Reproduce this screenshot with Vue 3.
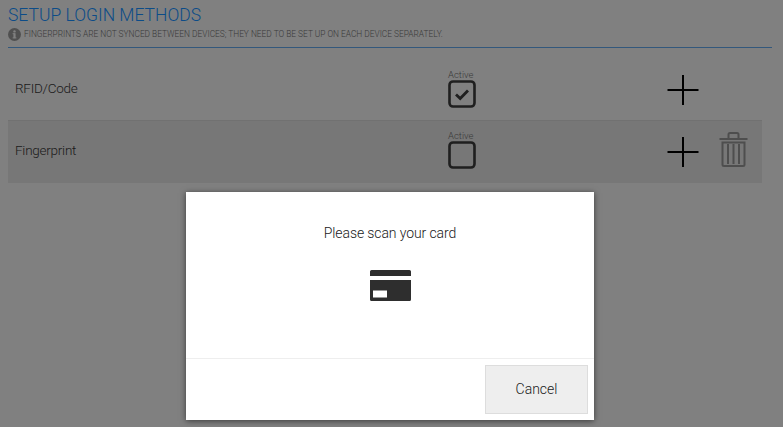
<script setup>
const rows = [
  { name: 'RFID/Code', checked: true, trash: false, alt: false },
  { name: 'Fingerprint', checked: false, trash: true, alt: true },
]
</script>

<template>
  <div class="page">
    <header class="head">
      <h1 class="title">SETUP LOGIN METHODS</h1>
      <p class="note">
        <svg class="info" width="13" height="13" viewBox="0 0 13 13">
          <circle cx="6.5" cy="6.5" r="6.5" fill="#505050" />
          <rect x="5.4" y="5.4" width="2.2" height="4.8" fill="#808080" />
          <rect x="4.6" y="5.2" width="2.6" height="1" fill="#808080" />
          <rect x="4.6" y="9.4" width="3.8" height="1" fill="#808080" />
          <circle cx="6.5" cy="3.4" r="1.2" fill="#808080" />
        </svg>
        <span>FINGERPRINTS ARE NOT SYNCED BETWEEN DEVICES; THEY NEED TO BE SET UP ON EACH DEVICE SEPARATELY.</span>
      </p>
    </header>

    <section class="list">
      <div v-for="r in rows" :key="r.name" class="row" :class="{ alt: r.alt }">
        <div class="name">{{ r.name }}</div>
        <div class="active">
          <span class="active-label">Active</span>
          <svg width="28" height="28" viewBox="0 0 28 28">
            <rect x="1.5" y="1.5" width="25" height="25" rx="3.5" fill="none" stroke="#1f1f1f" stroke-width="2.6" />
            <path v-if="r.checked" d="M8 14.5l4.2 4L20 10.5" fill="none" stroke="#1f1f1f" stroke-width="2.8" />
          </svg>
        </div>
        <div class="icon-cell">
          <svg width="32" height="32" viewBox="0 0 32 32">
            <path d="M0.5 16H31.5M16 1V31" stroke="#000" stroke-width="2" fill="none" />
          </svg>
        </div>
        <div class="icon-cell trash-cell">
          <svg v-if="r.trash" width="29" height="35" viewBox="0 0 29 35">
            <path d="M0.5 7H28.5" stroke="#4e4e4e" stroke-width="2" fill="none" />
            <path d="M9.5 6V2.5a1.5 1.5 0 0 1 1.5-1.5h7a1.5 1.5 0 0 1 1.5 1.5V6" stroke="#4e4e4e" stroke-width="2" fill="none" />
            <path d="M3.5 10.5H25.5V32.5a1.5 1.5 0 0 1-1.5 1.5H5a1.5 1.5 0 0 1-1.5-1.5Z" stroke="#4e4e4e" stroke-width="2" fill="none" />
            <path d="M9 12V32M14.5 12V32M20 12V32" stroke="#4e4e4e" stroke-width="2" fill="none" />
          </svg>
        </div>
      </div>
    </section>

    <div class="overlay">
      <div class="modal">
        <div class="modal-body">
          <p class="msg">Please scan your card</p>
          <svg class="card" width="41" height="31" viewBox="0 0 41 31">
            <path d="M1.5 0H39.5A1.5 1.5 0 0 1 41 1.5V6H0V1.5A1.5 1.5 0 0 1 1.5 0Z" fill="#2e2e2e" />
            <path d="M0 10H41V29.5A1.5 1.5 0 0 1 39.5 31H1.5A1.5 1.5 0 0 1 0 29.5Z" fill="#2e2e2e" />
            <rect x="3" y="20.5" width="14" height="7" fill="#fff" />
          </svg>
        </div>
        <div class="modal-foot">
          <button class="cancel" type="button">Cancel</button>
        </div>
      </div>
    </div>
  </div>
</template>

<style>
html, body { margin: 0; background: #808080; }
</style>

<style scoped>
.page {
  position: relative;
  width: 783px;
  height: 427px;
  overflow: hidden;
  background: #808080;
  font-family: Roboto, "Liberation Sans", sans-serif;
  font-weight: 300;
  box-sizing: border-box;
  padding-left: 8px;
}
.head {
  width: 764px;
  height: 48px;
  box-sizing: border-box;
  border-bottom: 1px solid #33587c;
}
.title {
  margin: 0;
  padding-top: 6px;
  font-size: 17.5px;
  line-height: 19px;
  font-weight: 300;
  color: #0c4c88;
}
.note {
  margin: 3px 0 0;
  display: flex;
  align-items: center;
  gap: 3px;
  font-size: 8.35px;
  line-height: 13px;
  color: #3a3a3a;
  white-space: nowrap;
}
.list { width: 754px; }
.row {
  display: grid;
  grid-template-columns: 440px 219px 52px 43px;
  height: 72px;
  box-sizing: border-box;
}
.row.alt {
  height: 63px;
  background: #777;
  border-top: 1px solid #717171;
}
.name {
  padding-left: 7px;
  padding-top: 32px;
  font-size: 13.5px;
  letter-spacing: -0.25px;
  line-height: 16px;
  color: #1a1a1a;
}
.alt .name { padding-top: 21px; }
.active {
  display: flex;
  flex-direction: column;
  align-items: flex-start;
  padding-top: 21px;
}
.alt .active { padding-top: 9px; }
.active-label {
  font-size: 9.5px;
  line-height: 11px;
  color: #3a3a3a;
}
.active svg { display: block; }
.icon-cell { padding-top: 26px; }
.alt .icon-cell { padding-top: 15px; }
.icon-cell svg { display: block; margin-left: -0.5px; }
.trash-cell { padding-top: 0; }
.alt .trash-cell { padding-top: 11px; }
.trash-cell svg { margin-left: 0; }

.overlay {
  position: absolute;
  left: 186px;
  top: 192px;
}
.modal {
  width: 408px;
  height: 228px;
  background: #fff;
  box-shadow: 0 1px 6px rgba(0, 0, 0, 0.55);
  display: flex;
  flex-direction: column;
}
.modal-body {
  height: 167px;
  box-sizing: border-box;
  border-bottom: 1px solid #eee;
  display: flex;
  flex-direction: column;
  align-items: center;
  padding-top: 33px;
}
.msg {
  margin: 0 0 28px;
  font-size: 14px;
  letter-spacing: -0.1px;
  line-height: 17px;
  color: #1a1a1a;
}
.card { display: block; }
.modal-foot {
  flex: 1;
  display: flex;
  justify-content: flex-end;
  align-items: flex-start;
  padding: 6px 6px 0 0;
}
.cancel {
  width: 103px;
  height: 49px;
  padding: 0 0 2px;
  background: #eee;
  border: 1px solid #ddd;
  font-family: inherit;
  font-weight: 300;
  font-size: 14px;
  color: #1a1a1a;
}
</style>
